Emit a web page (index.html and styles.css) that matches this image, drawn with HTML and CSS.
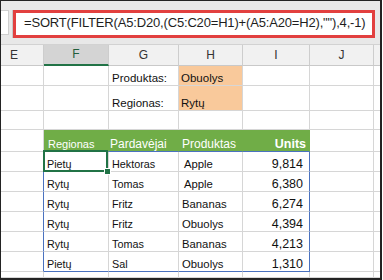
FILE: index.html
```html
<!DOCTYPE html>
<html lang="lt">
<head>
<meta charset="utf-8">
<title>SORT FILTER</title>
<link rel="stylesheet" href="styles.css">
</head>
<body>
<div class="frame">
  <div class="fbar">
    <div class="namebox"></div>
    <div class="formula">=SORT(FILTER(A5:D20,(C5:C20=H1)+(A5:A20=H2),""),4,-1)</div>
  </div>
  <div class="sheet">
    <div class="c h e">E</div><div class="c h sel">F</div><div class="c h">G</div><div class="c h">H</div><div class="c h">I</div><div class="c h">J</div><div class="c h k"></div>

    <div class="c"></div><div class="c"></div><div class="c lbl">Produktas:</div><div class="c lbl org">Obuolys</div><div class="c"></div><div class="c"></div><div class="c k"></div>
    <div class="c"></div><div class="c"></div><div class="c lbl">Regionas:</div><div class="c lbl org">Rytų</div><div class="c"></div><div class="c"></div><div class="c k"></div>
    <div class="c"></div><div class="c"></div><div class="c"></div><div class="c"></div><div class="c"></div><div class="c"></div><div class="c k"></div>

    <div class="c"></div><div class="c th tb-b reg">Regionas</div><div class="c th tb-b par">Pardavėjai</div><div class="c th tb-b">Produktas</div><div class="c th tb-b num">Units</div><div class="c"></div><div class="c k"></div>

    <div class="c tb-r"></div><div class="c nm active">Pietų<span class="selbox"></span><span class="handle"></span></div><div class="c nm">Hektoras</div><div class="c pr ap">Apple</div><div class="c num tb-r">9,814</div><div class="c"></div><div class="c k"></div>
    <div class="c tb-r"></div><div class="c nm">Rytų</div><div class="c nm">Tomas</div><div class="c pr ap">Apple</div><div class="c num tb-r">6,380</div><div class="c"></div><div class="c k"></div>
    <div class="c tb-r"></div><div class="c nm">Rytų</div><div class="c nm">Fritz</div><div class="c pr">Bananas</div><div class="c num tb-r">6,274</div><div class="c"></div><div class="c k"></div>
    <div class="c tb-r"></div><div class="c nm">Rytų</div><div class="c nm">Fritz</div><div class="c pr">Obuolys</div><div class="c num tb-r">4,394</div><div class="c"></div><div class="c k"></div>
    <div class="c tb-r"></div><div class="c nm">Rytų</div><div class="c nm">Tomas</div><div class="c pr">Bananas</div><div class="c num tb-r">4,213</div><div class="c"></div><div class="c k"></div>
    <div class="c tb-r"></div><div class="c nm tb-b">Pietų</div><div class="c nm tb-b">Sal</div><div class="c pr tb-b">Obuolys</div><div class="c num tb-r tb-b">1,310</div><div class="c"></div><div class="c k"></div>

    <div class="c"></div><div class="c"></div><div class="c"></div><div class="c"></div><div class="c"></div><div class="c"></div><div class="c k"></div>
  </div>
</div>
</body>
</html>
```
FILE: styles.css
```css
html, body {
  margin: 0;
  padding: 0;
  background: #ffffff;
}

body {
  font-family: "Liberation Sans", Arial, sans-serif;
}

.frame {
  width: 379px;
  border-style: solid;
  border-color: #232323;
  border-width: 1px 2px 2px 1px;
}

.fbar {
  height: 43px;
  background: #e8e8e8;
  border-bottom: 1px solid #d2d2d2;
  display: flex;
  align-items: flex-start;
}

.namebox {
  width: 8px;
  height: 25px;
  margin-top: 9px;
  box-sizing: border-box;
  background: #ffffff;
  border: 1px solid #cfcfcf;
  border-left: none;
}

.formula {
  margin-top: 9px;
  margin-left: 4px;
  width: 362px;
  height: 28px;
  box-sizing: border-box;
  border: 3px solid #e2403f;
  box-shadow: -1px 0 0 #c8c8c8;
  background: #ffffff;
  padding: 2px 0 0 8px;
  font-size: 13px;
  line-height: 15px;
  letter-spacing: -0.17px;
  color: #1e1e1e;
  white-space: nowrap;
}

.sheet {
  display: grid;
  grid-template-columns: 43px 65px 70px 64px 67px 64px 6px;
  grid-template-rows: 21px 20px 25px 19px 22px repeat(6, 20px) 6px;
}

.c {
  box-sizing: border-box;
  border-right: 1px solid #d6d6d6;
  border-bottom: 1px solid #d6d6d6;
  display: flex;
  align-items: flex-end;
  padding-left: 3px;
  font-size: 11px;
  line-height: 13px;
  color: #111111;
  white-space: nowrap;
  background: #ffffff;
}

.k {
  border-right: none;
}

.h {
  background: #f1f1f1;
  border-right-color: #cdcdcd;
  border-bottom-color: #c9c9c9;
  justify-content: center;
  align-items: center;
  padding: 0;
  font-size: 12px;
  color: #333333;
}

.h.e {
  justify-content: flex-start;
  padding-left: 9px;
}

.h.sel {
  background: #d4d4d4;
  border-bottom: 2px solid #217346;
  color: #225f3b;
}

.h.k {
  border-right: none;
}

.lbl {
  font-size: 11.5px;
  padding-left: 3px;
}

.org {
  background: #f9c99b;
  padding-left: 2px;
}

.th {
  background: #70ad47;
  border-right-color: #70ad47;
  color: #ffffff;
  font-size: 12px;
}

.th.reg {
  font-size: 11px;
  padding-left: 4px;
}

.th.par {
  padding-left: 1px;
}

.tb-r {
  border-right-color: #4a72c0;
}

.tb-b {
  border-bottom-color: #4a72c0;
}

.nm {
  font-size: 10.8px;
}

.pr {
  font-size: 11.3px;
}

.pr.ap {
  padding-left: 5px;
}

.num {
  justify-content: flex-end;
  padding-left: 0;
  padding-right: 6px;
  font-size: 12.5px;
}

.th.num {
  font-weight: bold;
  padding-right: 3px;
}

.active {
  position: relative;
  z-index: 2;
}

.selbox {
  position: absolute;
  left: -1px;
  top: -2px;
  right: 0;
  bottom: -1px;
  border: 2px solid #217346;
}

.handle {
  position: absolute;
  right: -3px;
  bottom: -4px;
  width: 5px;
  height: 5px;
  background: #217346;
  border: 1px solid #ffffff;
}
```
